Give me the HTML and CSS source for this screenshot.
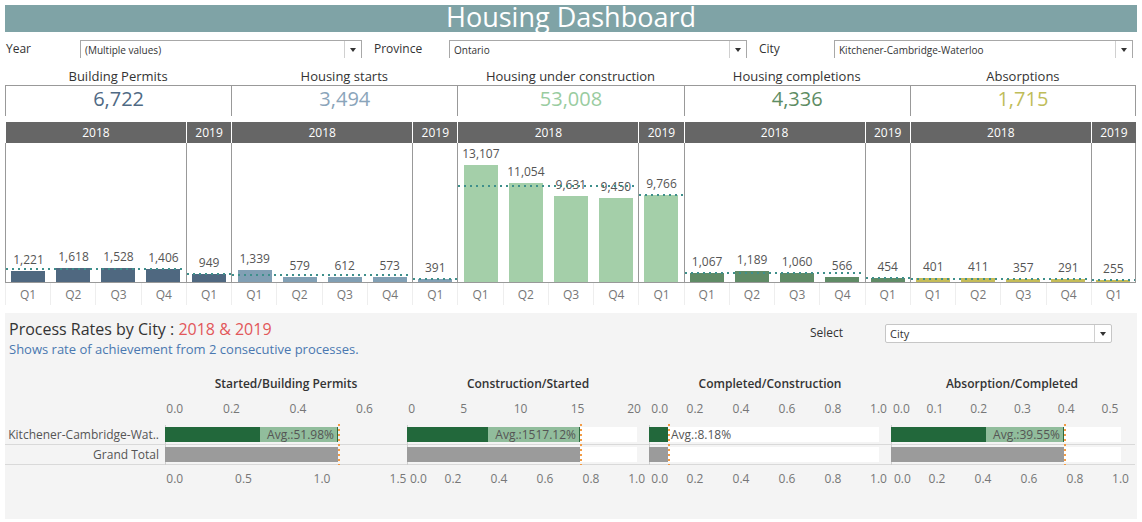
FILE: index.html
```html
<!DOCTYPE html>
<html>
<head>
<meta charset="utf-8">
<title>Housing Dashboard</title>
<link rel="stylesheet" href="styles.css">
</head>
<body>
<div class="page">
  <div class="title-bar">Housing Dashboard</div>

  <div class="filters">
    <div class="flabel fl-year">Year</div>
    <div class="dd dd-year"><span class="dd-text">(Multiple values)</span><span class="dd-arrow"></span></div>
    <div class="flabel fl-prov">Province</div>
    <div class="dd dd-prov"><span class="dd-text">Ontario</span><span class="dd-arrow"></span></div>
    <div class="flabel fl-city">City</div>
    <div class="dd dd-city"><span class="dd-text">Kitchener-Cambridge-Waterloo</span><span class="dd-arrow"></span></div>
  </div>

  <div class="kpis">
    <div class="kpi"><div class="kpi-label">Building Permits</div><div class="kpi-box v1">6,722</div></div>
    <div class="kpi"><div class="kpi-label">Housing starts</div><div class="kpi-box v2">3,494</div></div>
    <div class="kpi"><div class="kpi-label">Housing under construction</div><div class="kpi-box v3">53,008</div></div>
    <div class="kpi"><div class="kpi-label">Housing completions</div><div class="kpi-box v4">4,336</div></div>
    <div class="kpi last"><div class="kpi-label">Absorptions</div><div class="kpi-box v5">1,715</div></div>
  </div>

  <div class="chart">
    <div class="sec s1">
      <div class="grp g18">
        <div class="yr">2018</div>
        <div class="plot">
          <div class="avg" style="bottom:11.9px"></div>
          <div class="col"><span class="val">1,221</span><div class="bar" style="height:10.9px"></div></div>
          <div class="col"><span class="val">1,618</span><div class="bar" style="height:14.4px"></div></div>
          <div class="col"><span class="val">1,528</span><div class="bar" style="height:13.6px"></div></div>
          <div class="col"><span class="val">1,406</span><div class="bar" style="height:12.6px"></div></div>
        </div>
        <div class="qrow"><span class="q">Q1</span><span class="q">Q2</span><span class="q">Q3</span><span class="q">Q4</span></div>
      </div>
      <div class="grp g19">
        <div class="yr">2019</div>
        <div class="plot">
          <div class="avg" style="bottom:7.5px"></div>
          <div class="col"><span class="val">949</span><div class="bar" style="height:8.5px"></div></div>
        </div>
        <div class="qrow"><span class="q">Q1</span></div>
      </div>
    </div>

    <div class="sec s2">
      <div class="grp g18">
        <div class="yr">2018</div>
        <div class="plot">
          <div class="avg" style="bottom:5.9px"></div>
          <div class="col"><span class="val">1,339</span><div class="bar" style="height:12px"></div></div>
          <div class="col"><span class="val">579</span><div class="bar" style="height:5.2px"></div></div>
          <div class="col"><span class="val">612</span><div class="bar" style="height:5.5px"></div></div>
          <div class="col"><span class="val">573</span><div class="bar" style="height:5.1px"></div></div>
        </div>
        <div class="qrow"><span class="q">Q1</span><span class="q">Q2</span><span class="q">Q3</span><span class="q">Q4</span></div>
      </div>
      <div class="grp g19">
        <div class="yr">2019</div>
        <div class="plot">
          <div class="avg" style="bottom:2.5px"></div>
          <div class="col"><span class="val">391</span><div class="bar" style="height:3.5px"></div></div>
        </div>
        <div class="qrow"><span class="q">Q1</span></div>
      </div>
    </div>

    <div class="sec s3">
      <div class="grp g18">
        <div class="yr">2018</div>
        <div class="plot">
          <div class="avg" style="bottom:95.5px"></div>
          <div class="col"><span class="val">13,107</span><div class="bar" style="height:117px"></div></div>
          <div class="col"><span class="val">11,054</span><div class="bar" style="height:98.7px"></div></div>
          <div class="col"><span class="val">9,631</span><div class="bar" style="height:86px"></div></div>
          <div class="col"><span class="val">9,450</span><div class="bar" style="height:84.4px"></div></div>
        </div>
        <div class="qrow"><span class="q">Q1</span><span class="q">Q2</span><span class="q">Q3</span><span class="q">Q4</span></div>
      </div>
      <div class="grp g19">
        <div class="yr">2019</div>
        <div class="plot">
          <div class="avg" style="bottom:86.2px"></div>
          <div class="col"><span class="val">9,766</span><div class="bar" style="height:87.2px"></div></div>
        </div>
        <div class="qrow"><span class="q">Q1</span></div>
      </div>
    </div>

    <div class="sec s4">
      <div class="grp g18">
        <div class="yr">2018</div>
        <div class="plot">
          <div class="avg" style="bottom:7.7px"></div>
          <div class="col"><span class="val">1,067</span><div class="bar" style="height:9.5px"></div></div>
          <div class="col"><span class="val">1,189</span><div class="bar" style="height:10.6px"></div></div>
          <div class="col"><span class="val">1,060</span><div class="bar" style="height:9.5px"></div></div>
          <div class="col"><span class="val">566</span><div class="bar" style="height:5.1px"></div></div>
        </div>
        <div class="qrow"><span class="q">Q1</span><span class="q">Q2</span><span class="q">Q3</span><span class="q">Q4</span></div>
      </div>
      <div class="grp g19">
        <div class="yr">2019</div>
        <div class="plot">
          <div class="avg" style="bottom:3.1px"></div>
          <div class="col"><span class="val">454</span><div class="bar" style="height:4.1px"></div></div>
        </div>
        <div class="qrow"><span class="q">Q1</span></div>
      </div>
    </div>

    <div class="sec s5">
      <div class="grp g18">
        <div class="yr">2018</div>
        <div class="plot">
          <div class="avg" style="bottom:2.3px"></div>
          <div class="col"><span class="val">401</span><div class="bar" style="height:3.6px"></div></div>
          <div class="col"><span class="val">411</span><div class="bar" style="height:3.7px"></div></div>
          <div class="col"><span class="val">357</span><div class="bar" style="height:3.2px"></div></div>
          <div class="col"><span class="val">291</span><div class="bar" style="height:2.6px"></div></div>
        </div>
        <div class="qrow"><span class="q">Q1</span><span class="q">Q2</span><span class="q">Q3</span><span class="q">Q4</span></div>
      </div>
      <div class="grp g19 lastgrp">
        <div class="yr">2019</div>
        <div class="plot">
          <div class="avg" style="bottom:1.3px"></div>
          <div class="col"><span class="val">255</span><div class="bar" style="height:2.3px"></div></div>
        </div>
        <div class="qrow"><span class="q">Q1</span></div>
      </div>
    </div>
  </div>

  <div class="rates">
    <div class="rates-head">
      <div class="rates-title">
        <div class="rt">Process Rates by City : <span class="red">2018 &amp; 2019</span></div>
        <div class="rs">Shows rate of achievement from 2 consecutive processes.</div>
      </div>
      <div class="select">
        <span class="sel-label">Select</span>
        <div class="sel-dd"><span class="sel-text">City</span><span class="dd-arrow"></span></div>
      </div>
    </div>

    <div class="rhdr">
      <div class="rlab"></div>
      <div class="rcell">Started/Building Permits</div>
      <div class="rcell">Construction/Started</div>
      <div class="rcell">Completed/Construction</div>
      <div class="rcell">Absorption/Completed</div>
    </div>

    <div class="raxis">
      <div class="rlab"></div>
      <div class="rcell">
        <span class="tk first" style="left:1.3px">0.0</span>
        <span class="tk" style="left:66.5px">0.2</span>
        <span class="tk" style="left:133px">0.4</span>
        <span class="tk" style="left:199.5px">0.6</span>
      </div>
      <div class="rcell">
        <span class="tk first" style="left:1.2px">0</span>
        <span class="tk" style="left:56.7px">5</span>
        <span class="tk" style="left:113.5px">10</span>
        <span class="tk" style="left:170.5px">15</span>
        <span class="tk" style="left:227px">20</span>
      </div>
      <div class="rcell">
        <span class="tk first" style="left:2.3px">0.0</span>
        <span class="tk" style="left:46px">0.2</span>
        <span class="tk" style="left:92px">0.4</span>
        <span class="tk" style="left:138px">0.6</span>
        <span class="tk" style="left:184px">0.8</span>
        <span class="tk" style="left:229.5px">1.0</span>
      </div>
      <div class="rcell">
        <span class="tk first" style="left:2px">0.0</span>
        <span class="tk" style="left:44px">0.1</span>
        <span class="tk" style="left:87.7px">0.2</span>
        <span class="tk" style="left:131.5px">0.3</span>
        <span class="tk" style="left:175.3px">0.4</span>
        <span class="tk" style="left:219px">0.5</span>
      </div>
    </div>

    <div class="rrow r1">
      <div class="rlab">Kitchener-Cambridge-Wat..</div>
      <div class="rcell">
        <div class="track clear">
          <div class="seg dk" style="width:95px"></div>
          <div class="seg lt" style="width:78px">Avg.:51.98%</div>
        </div>
        <div class="mark" style="left:172.5px"></div>
      </div>
      <div class="rcell">
        <div class="track">
          <div class="seg dk" style="width:81px"></div>
          <div class="seg lt" style="width:92px">Avg.:1517.12%</div>
        </div>
        <div class="mark" style="left:172.5px"></div>
      </div>
      <div class="rcell">
        <div class="track">
          <div class="seg dk" style="width:19px"></div>
          <div class="seg note">Avg.:8.18%</div>
        </div>
        <div class="mark" style="left:18.5px"></div>
      </div>
      <div class="rcell">
        <div class="track">
          <div class="seg dk" style="width:95px"></div>
          <div class="seg lt" style="width:78px">Avg.:39.55%</div>
        </div>
        <div class="mark" style="left:172.5px"></div>
      </div>
    </div>

    <div class="rrow r2">
      <div class="rlab">Grand Total</div>
      <div class="rcell">
        <div class="track clear"><div class="seg gy" style="width:173px"></div></div>
        <div class="mark" style="left:172.5px"></div>
      </div>
      <div class="rcell">
        <div class="track"><div class="seg gy" style="width:173px"></div></div>
        <div class="mark" style="left:172.5px"></div>
      </div>
      <div class="rcell">
        <div class="track"><div class="seg gy" style="width:19px"></div></div>
        <div class="mark" style="left:18.5px"></div>
      </div>
      <div class="rcell">
        <div class="track"><div class="seg gy" style="width:173px"></div></div>
        <div class="mark" style="left:172.5px"></div>
      </div>
    </div>

    <div class="raxis bot">
      <div class="rlab"></div>
      <div class="rcell">
        <span class="tk first" style="left:1.3px">0.0</span>
        <span class="tk" style="left:78.5px">0.5</span>
        <span class="tk" style="left:157px">1.0</span>
        <span class="tk" style="left:233px">1.5</span>
      </div>
      <div class="rcell">
        <span class="tk first" style="left:3px">0.0</span>
        <span class="tk" style="left:46px">0.2</span>
        <span class="tk" style="left:92px">0.4</span>
        <span class="tk" style="left:138px">0.6</span>
        <span class="tk" style="left:184px">0.8</span>
        <span class="tk" style="left:229.7px">1.0</span>
      </div>
      <div class="rcell">
        <span class="tk first" style="left:2.3px">0.0</span>
        <span class="tk" style="left:46px">0.2</span>
        <span class="tk" style="left:92px">0.4</span>
        <span class="tk" style="left:138px">0.6</span>
        <span class="tk" style="left:184px">0.8</span>
        <span class="tk" style="left:229.5px">1.0</span>
      </div>
      <div class="rcell">
        <span class="tk first" style="left:3px">0.0</span>
        <span class="tk" style="left:46px">0.2</span>
        <span class="tk" style="left:92px">0.4</span>
        <span class="tk" style="left:138px">0.6</span>
        <span class="tk" style="left:184px">0.8</span>
        <span class="tk" style="left:229.5px">1.0</span>
      </div>
    </div>
  </div>
</div>
</body>
</html>
```

FILE: styles.css
```css
* { box-sizing: border-box; margin: 0; padding: 0; }

body {
  margin: 0;
  background: #fff;
  font-family: "Open Sans", "Noto Sans", sans-serif;
  color: #333;
  width: 1142px;
  height: 522px;
  overflow: hidden;
}

.page { padding: 5px 0 0 5px; width: 1142px; }

/* Title */
.title-bar {
  width: 1132px;
  height: 27px;
  background: #7fa3a6;
  color: #fff;
  font-size: 27px;
  line-height: 23px;
  text-align: center;
  white-space: nowrap;
}

/* Filters */
.filters { display: flex; height: 18px; margin-top: 8px; }
.flabel { font-size: 12px; line-height: 18px; font-weight: 500; color: #333; }
.fl-year { width: 74px; margin-left: 1px; }
.fl-prov { width: 75px; margin-left: 12px; }
.fl-city { width: 75px; margin-left: 12px; }
.dd {
  display: flex;
  height: 18px;
  border: 1px solid #a8a8a8;
  border-bottom: none;
  background: #fff;
}
.dd-year { width: 282px; }
.dd-prov { width: 298px; }
.dd-city { width: 299px; }
.dd-text { flex: 1; font-size: 10px; line-height: 19px; padding-left: 4px; color: #333; white-space: nowrap; }
.dd-arrow {
  width: 17px;
  border-left: 1px solid #d0d0d0;
  display: flex;
  align-items: center;
  justify-content: center;
}
.dd-arrow::after {
  content: "";
  border-top: 4px solid #333;
  border-left: 3.5px solid transparent;
  border-right: 3.5px solid transparent;
}

/* KPIs */
.kpis { display: grid; grid-template-columns: repeat(5, 1fr); width: 1131px; margin-top: 10px; }
.kpi-label { height: 17px; line-height: 17px; font-size: 13px; font-weight: 500; text-align: center; color: #333; white-space: nowrap; }
.kpi-box {
  height: 31px;
  border-top: 1px solid #999;
  border-left: 1px solid #999;
  font-size: 20px;
  line-height: 26px;
  text-align: center;
}
.kpi.last .kpi-box { border-right: 1px solid #999; }
.v1 { color: #4f6a84; }
.v2 { color: #8aa4ba; }
.v3 { color: #99cc9f; }
.v4 { color: #5d8c63; }
.v5 { color: #bfbd5a; }

/* Bar chart */
.chart { display: grid; grid-template-columns: repeat(5, 1fr); width: 1131px; margin-top: 6px; }
.sec { display: flex; min-width: 0; }
.grp { min-width: 0; display: flex; flex-direction: column; }
.g18 { flex: 4 1 0; }
.g19 { flex: 1 1 0; }
.yr {
  height: 21px;
  background: #666;
  color: #fff;
  font-size: 12px;
  line-height: 21px;
  text-align: center;
  border-left: 1px solid #fff;
}
.plot {
  position: relative;
  height: 140px;
  border-left: 1px solid #999;
  border-bottom: 1px solid #999;
  display: flex;
  align-items: stretch;
}
.lastgrp .plot { border-right: 1px solid #999; }
.col {
  flex: 1 1 0;
  min-width: 0;
  display: flex;
  flex-direction: column;
  align-items: center;
  justify-content: flex-end;
}
.val { font-size: 12px; line-height: 14px; color: #555; margin-bottom: 4px; white-space: nowrap; }
.bar { width: 34px; }
.s1 .bar { background: #4f6880; }
.s2 .bar { background: #819fb4; }
.s3 .bar { background: #a4cfa9; }
.s4 .bar { background: #5f8b66; }
.s5 .bar { background: #c5bc58; }
.avg {
  position: absolute;
  left: 0;
  right: 0;
  height: 2px;
  background: repeating-linear-gradient(90deg, #3e8f8b 0 2px, transparent 2px 6px);
  z-index: 2;
}
.qrow { display: flex; height: 22px; }
.q {
  flex: 1 1 0;
  text-align: center;
  font-size: 12px;
  line-height: 16px;
  padding-top: 4px;
  color: #777;
  border-left: 1px solid #eee;
}

/* Process rates */
.rates {
  width: 1132px;
  height: 206px;
  margin-top: 8px;
  background: #f4f4f4;
}
.rates-head {
  display: flex;
  justify-content: space-between;
  padding: 6px 25px 0 4px;
}
.rt { font-size: 16px; line-height: 20px; color: #333; white-space: nowrap; }
.red { color: #e2575a; }
.rs { font-size: 13px; line-height: 16px; margin-top: 2px; color: #4a78b0; white-space: nowrap; }
.select { display: flex; margin-top: 5px; height: 18px; }
.sel-label { width: 75px; font-size: 12px; font-weight: 500; line-height: 18px; color: #333; }
.sel-dd {
  width: 227px;
  height: 19px;
  display: flex;
  background: #fff;
  border: 1px solid #c6c6c6;
  border-radius: 2px;
}
.sel-text { flex: 1; font-size: 11px; line-height: 17px; padding-left: 4px; color: #333; }

.rhdr, .raxis, .rrow { display: flex; width: 1130px; }
.rlab { width: 160px; flex: none; }
.rcell { width: 242px; flex: none; position: relative; }

.rhdr { margin-top: 19px; }
.rhdr .rcell { font-size: 12px; font-weight: 600; line-height: 16px; text-align: center; color: #333; white-space: nowrap; }

.raxis { margin-top: 9px; height: 16px; }
.raxis.bot { margin-top: 6px; }
.tk {
  position: absolute;
  top: 0;
  font-size: 12px;
  line-height: 16px;
  color: #777;
  transform: translateX(-50%);
  white-space: nowrap;
}
.tk.first { transform: none; }

.rrow { height: 20px; border-bottom: 1px solid #d9d9d9; }
.r1 { margin-top: 8px; }
.rrow .rlab {
  text-align: right;
  padding-right: 6px;
  font-size: 12px;
  line-height: 19px;
  color: #555;
  white-space: nowrap;
  overflow: hidden;
}
.rrow .rcell::before {
  content: "";
  position: absolute;
  left: 0;
  top: 0;
  bottom: -1px;
  width: 1px;
  background: #cfcfcf;
}
.track {
  position: relative;
  width: 230px;
  height: 15px;
  margin-top: 2px;
  background: #fff;
  display: flex;
}
.track.clear { background: transparent; }
.seg { height: 15px; font-size: 12px; line-height: 15px; color: #555; white-space: nowrap; }
.dk { background: #22683b; }
.lt { background: #91bd9c; text-align: right; padding-right: 3px; overflow: hidden; border-right: 1px solid #2c6b40; }
.gy { background: #9b9b9b; }
.note { padding-left: 3px; }
.mark {
  position: absolute;
  top: -1px;
  bottom: -1px;
  width: 2px;
  background: repeating-linear-gradient(180deg, #f39c45 0 2px, transparent 2px 5px);
  z-index: 2;
}
```
